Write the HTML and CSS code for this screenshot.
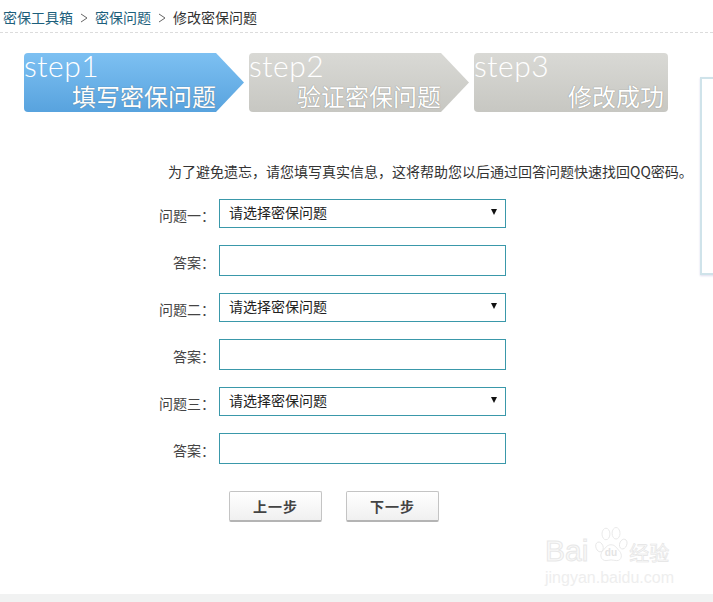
FILE: index.html
```html
<!DOCTYPE html>
<html lang="zh-CN">
<head>
<meta charset="utf-8">
<title>修改密保问题</title>
<link rel="stylesheet" href="styles.css">
</head>
<body>
<div class="page">
  <nav class="crumbs">
    <a class="crumb-link">密保工具箱</a>
    <svg class="sep" width="8" height="10" viewBox="0 0 8 10"><path d="M1 1l6 4-6 4" fill="none" stroke="#666" stroke-width="1"/></svg>
    <a class="crumb-link">密保问题</a>
    <svg class="sep" width="8" height="10" viewBox="0 0 8 10"><path d="M1 1l6 4-6 4" fill="none" stroke="#666" stroke-width="1"/></svg>
    <span>修改密保问题</span>
  </nav>

  <div class="steps">
    <div class="step step-active step-arrow">
      <div class="step-num">step1</div>
      <div class="step-name">填写密保问题</div>
    </div>
    <div class="step step-idle step-arrow">
      <div class="step-num">step2</div>
      <div class="step-name">验证密保问题</div>
    </div>
    <div class="step step-idle step-last">
      <div class="step-num">step3</div>
      <div class="step-name">修改成功</div>
    </div>
  </div>

  <p class="intro">为了避免遗忘，请您填写真实信息，这将帮助您以后通过回答问题快速找回QQ密码。</p>

  <form class="form">
    <label class="lbl lbl-q">问题一：</label>
    <div class="select"><span>请选择密保问题</span><i class="caret"></i></div>
    <label class="lbl">答案：</label>
    <div class="input"></div>
    <label class="lbl lbl-q">问题二：</label>
    <div class="select"><span>请选择密保问题</span><i class="caret"></i></div>
    <label class="lbl">答案：</label>
    <div class="input"></div>
    <label class="lbl lbl-q">问题三：</label>
    <div class="select"><span>请选择密保问题</span><i class="caret"></i></div>
    <label class="lbl">答案：</label>
    <div class="input"></div>
  </form>

  <div class="actions">
    <button class="btn" type="button">上一步</button>
    <button class="btn" type="button">下一步</button>
  </div>

  <div class="foot"></div>

  <aside class="side"></aside>

  <div class="mark">
    <div class="mark-row">
      <span class="mark-bai">Bai</span>
      <svg class="mark-paw" viewBox="0 0 50 50" fill="#fff" stroke="#e6e6e6" stroke-width="1.2">
        <ellipse cx="9" cy="27" rx="5" ry="7" transform="rotate(-20 9 27)"/>
        <ellipse cx="18" cy="9" rx="5.5" ry="8"/>
        <ellipse cx="32" cy="8" rx="5.5" ry="8"/>
        <ellipse cx="42" cy="23" rx="5" ry="7" transform="rotate(20 42 23)"/>
        <path d="M25 24c-6 0-8 5-12 9-4 5-2 13 5 13 3 0 5-1 7-1s5 1 8 1c7 0 8-8 4-13-4-4-6-9-12-9z"/>
        <text x="25" y="40" text-anchor="middle" class="mark-du">du</text>
      </svg>
      <span class="mark-jy">经验</span>
    </div>
    <div class="mark-url">jingyan.baidu.com</div>
  </div>
</div>
</body>
</html>
```
FILE: styles.css
```css
* { box-sizing: border-box; }
html, body { margin: 0; padding: 0; background: #fff; }
body {
  font-family: "Noto Sans CJK SC", "Liberation Sans", sans-serif;
  font-size: 14px;
  color: #333;
}
.page {
  position: relative;
  width: 713px;
  height: 602px;
  overflow: hidden;
  display: flex;
  flex-direction: column;
}
.crumbs {
  height: 33px;
  padding: 7px 0 0 3px;
  border-bottom: 1px dashed #dcdcdc;
  display: flex;
  align-items: flex-start;
  gap: 7px;
  line-height: 20px;
  color: #333;
}
.crumb-link { color: #1d5f7c; }
.sep { margin-top: 6px; }

.steps {
  display: flex;
  margin: 20px 0 0 24px;
  height: 59px;
  gap: 5px;
}
.step {
  position: relative;
  color: #fff;
  height: 59px;
  border-radius: 4px;
}
.step-arrow {
  width: 220px;
  clip-path: polygon(0 0, 192px 0, 220px 29.5px, 192px 59px, 0 59px);
}
.step-last { width: 194px; }
.step-active { background: linear-gradient(#7dc0f2, #58a3de); }
.step-idle { background: linear-gradient(#d9d9d5, #c7c7c2); }
.step-num {
  font-family: "Lato", "Liberation Sans", sans-serif;
  font-weight: 300;
  font-size: 30px;
  line-height: 24px;
  letter-spacing: .5px;
  color: #fff;
  height: 24px;
}
.step-name {
  margin-top: 5px;
  font-size: 24px;
  font-weight: 400;
  line-height: 28px;
  text-align: right;
  padding-right: 28px;
  white-space: nowrap;
  text-shadow: 0 0 1px rgba(80, 80, 80, .7);
}
.step-last .step-name { padding-right: 4px; }

.intro {
  margin: 50px 0 0 168px;
  line-height: 18px;
  font-size: 14px;
  white-space: nowrap;
  color: #333;
}
.form {
  margin: 19px 0 0 0;
  display: grid;
  grid-template-columns: 215px 287px;
  column-gap: 4px;
  row-gap: 17px;
  grid-template-rows: 29px 31px 29px 31px 29px 31px;
}
.lbl {
  text-align: right;
  font-size: 14px;
  line-height: 18px;
  padding-top: 8px;
  color: #444;
  white-space: nowrap;
}
.lbl-q { padding-top: 7px; }
.select, .input {
  border: 1px solid #3a98aa;
  background: #fff;
}
.select {
  display: flex;
  align-items: center;
  justify-content: space-between;
  padding: 0 8px 3px 9px;
  font-size: 14px;
  color: #222;
}
.caret {
  width: 0;
  height: 0;
  border-left: 3px solid transparent;
  border-right: 3px solid transparent;
  border-top: 6px solid #111;
}
.actions {
  margin: 27px 0 0 229px;
  display: flex;
  gap: 24px;
}
.btn {
  width: 93px;
  height: 31px;
  padding: 0;
  border: 1px solid #c4c4c4;
  border-bottom: 2px solid #b4b4b4;
  border-radius: 2px;
  background: linear-gradient(#fff, #f0f0f0);
  font-family: inherit;
  font-size: 14px;
  letter-spacing: 1px;
  font-weight: 700;
  color: #444;
}
.foot {
  margin-top: auto;
  height: 8px;
  background: #f1f2f2;
}
.side {
  position: absolute;
  left: 700px;
  top: 77px;
  width: 30px;
  height: 198px;
  border: 2px solid #cfe3ea;
  background: #fff;
  box-shadow: 0 1px 2px #dde;
}
.mark {
  position: absolute;
  left: 545px;
  top: 525px;
  width: 130px;
}
.mark-row {
  display: flex;
  align-items: flex-end;
  height: 41px;
}
.mark-bai {
  font-family: "Liberation Sans", sans-serif;
  font-size: 30px;
  line-height: 30px;
  color: #fafafa;
  -webkit-text-stroke: 1px #e8e8e8;
}
.mark-paw { margin-left: 5px; flex: none; width: 36px; height: 41px; }
.mark-du { font-family: "Liberation Sans", sans-serif; font-size: 14px; font-weight: 700; stroke: none; fill: #e4e4e4; }
.mark-jy {
  font-size: 20px;
  line-height: 26px;
  color: #fafafa;
  -webkit-text-stroke: .6px #e4e4e4;
  white-space: nowrap;
}
.mark-url {
  margin-top: 4px;
  font-family: "Liberation Sans", sans-serif;
  font-size: 16px;
  line-height: 16px;
  color: #eeeeee;
  white-space: nowrap;
}
```
